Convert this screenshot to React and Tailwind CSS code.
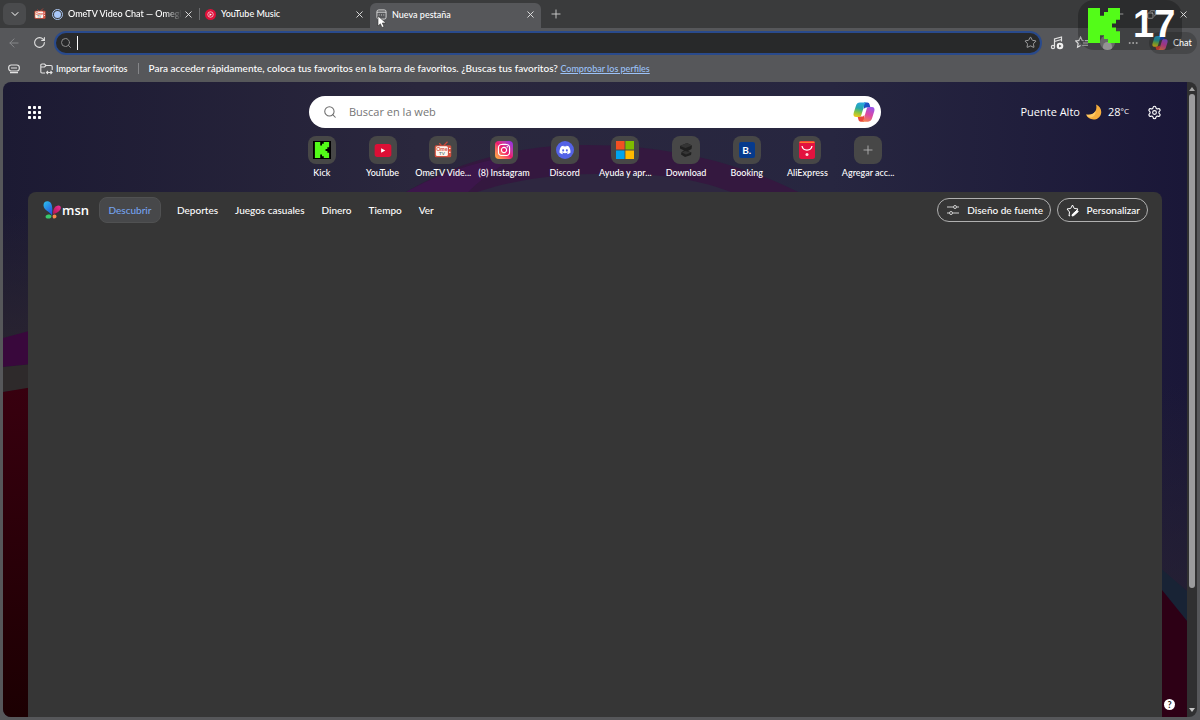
import { Search, X, Plus, Minus, Copy, ChevronDown, ArrowLeft, RotateCw, Star, Settings, Ellipsis } from 'lucide-react';
import { FaDiscord, FaInstagram } from 'react-icons/fa';

const KICK_PATH = 'M1.333 0h8v5.333H12V2.667h2.667V0h8v8H20v2.667h-2.667v2.666H20V16h2.667v8h-8v-2.667H12v-2.666H9.333V24h-8z';

const OmeTvIcon = ({ className }) => (
  <svg viewBox="0 0 24 24" className={className} aria-hidden="true">
    <path d="M10 6 7 3M13 6l5-5" stroke="#c9473a" strokeWidth="1.6" fill="none" />
    <rect x="1" y="5.500" width="22" height="16" rx="2" fill="#d4503f" />
    <rect x="2.500" y="7" width="16" height="13" rx="2" fill="#fff5ee" />
    <circle cx="21" cy="10" r="1" fill="#fff" />
    <circle cx="21" cy="15" r="1" fill="#fff" />
    <text x="10.500" y="13.500" textAnchor="middle" fontSize="7" fontWeight="700" fill="#d4503f" fontFamily="Lato, sans-serif">Ome</text>
    <text x="10.500" y="19" textAnchor="middle" fontSize="6" fontWeight="700" fill="#5b7f7a" fontFamily="Lato, sans-serif">TV</text>
  </svg>
);

const CopilotIcon = ({ className }) => (
  <svg viewBox="0 0 24 24" className={className} aria-hidden="true">
    <defs>
      <linearGradient id="cpLeft" x1="0.5" y1="0" x2="0.3" y2="1">
        <stop offset="0" stopColor="#2aa5e0" />
        <stop offset="0.4" stopColor="#27a8a8" />
        <stop offset="0.7" stopColor="#8cc63f" />
        <stop offset="1" stopColor="#f2c81e" />
      </linearGradient>
      <linearGradient id="cpRight" x1="0.7" y1="0" x2="0.3" y2="1">
        <stop offset="0" stopColor="#9a55e8" />
        <stop offset="0.5" stopColor="#d948a5" />
        <stop offset="1" stopColor="#f58050" />
      </linearGradient>
    </defs>
    <path d="M12 1.5h3.5c1.6 0 2.2 1 2.6 2.4L19 7h-4.500c-1.500 0-2.300.8-2.800 2.400z" fill="#1d4fc4" />
    <path d="M12 22.500H8.500c-1.600 0-2.200-1-2.600-2.400L5 17h4.500c1.500 0 2.300-.8 2.800-2.400z" fill="#e8483b" />
    <path d="M7.500 1.500h7.300c-1.300.3-2 1.300-2.500 3L9.200 15c-.5 1.600-1.400 2.500-3 2.500H3.400C.8 17.500 0 15.400.8 12.800l2.500-8C4 2.500 5.300 1.500 7.500 1.500z" fill="url(#cpLeft)" />
    <path d="M16.500 22.500H9.200c1.300-.3 2-1.300 2.500-3L14.800 9c.5-1.600 1.400-2.500 3-2.500h2.800c2.600 0 3.400 2.100 2.600 4.700l-2.500 8c-.7 2.300-2 3.300-4.200 3.300z" fill="url(#cpRight)" />
  </svg>
);

const MsnIcon = () => (
  <svg viewBox="0 0 18 18" className="size-[18px]" aria-hidden="true">
    <defs>
      <linearGradient id="msnBlue" x1="0" y1="0" x2="0.6" y2="1">
        <stop offset="0" stopColor="#2cc3ee" />
        <stop offset="1" stopColor="#2458dd" />
      </linearGradient>
      <linearGradient id="msnPink" x1="1" y1="0" x2="0" y2="1">
        <stop offset="0" stopColor="#f0339b" />
        <stop offset="1" stopColor="#b3124f" />
      </linearGradient>
    </defs>
    <path d="M9 14.500C7.500 11 .8 9.500.5 4.500.3 1.500 2.500 0 5 .3 9 1 10 6 9 14.500z" fill="url(#msnBlue)" />
    <path d="M10 13c0-5 2-8.500 5.500-8.500 2.300 0 3 2.200 1.700 4.200C15.800 11 13 12.500 10 13z" fill="url(#msnPink)" />
    <path d="M8.500 15c-.8-2-4.500-2-5.800 0-.7 1.500.6 2.700 2.600 2.600 1.900 0 3.200-.8 3.200-2.600z" fill="#39c96b" />
    <path d="M10 14c1.500-1.200 3.500-.5 3.500 1.500 0 1.700-2.500 2.700-3.500 1.500-.5-.6-.5-2.300 0-3z" fill="#f7894a" />
  </svg>
);

const KickTile = () => (
  <span className="flex size-[18px] items-center justify-center bg-black">
    <svg viewBox="0 0 24 24" className="size-4" aria-hidden="true"><path d={KICK_PATH} fill="#53fc18" /></svg>
  </span>
);

const YouTubeTile = () => (
  <svg viewBox="0 0 18 14" className="h-[13px] w-[18px]" aria-hidden="true">
    <rect width="18" height="14" rx="3" fill="#dc0f35" />
    <path d="M7 4.500v5L11.500 7z" fill="#fff" />
  </svg>
);

const MicrosoftTile = () => (
  <svg viewBox="0 0 18 18" className="size-[18px]" aria-hidden="true">
    <path d="M0 0h8.600v8.600H0z" fill="#f25022" />
    <path d="M9.400 0H18v8.600H9.400z" fill="#7fba00" />
    <path d="M0 9.400h8.600V18H0z" fill="#00a4ef" />
    <path d="M9.400 9.400H18V18H9.400z" fill="#ffb900" />
  </svg>
);

const DownloadTile = () => (
  <svg viewBox="0 0 16 16" className="size-4" aria-hidden="true">
    <path d="M2 4 9 1l5 2.500-.5 3.500-3.500 2 3.500 1.500-.5 2.500L7 15l-4-2.500.5-2.500L6 8.500 2 6.500z" fill="#202020" />
    <path d="m2 4 7-3 5 2.500L7.500 6z" fill="#343434" />
    <path d="m4 10.500 3-1.500 6 1.500L8 12.500z" fill="#353535" />
  </svg>
);

const AliExpressTile = () => (
  <svg viewBox="0 0 18 18" className="size-[18px]" aria-hidden="true">
    <rect x="1" width="16" height="18" rx="2.500" fill="#e3123f" />
    <path d="M1.500 1.200h15" stroke="#ff7a2e" strokeWidth="1.600" />
    <path d="M4 5c1 5.500 9 5.500 10 0" stroke="#fff" strokeWidth="1.300" fill="none" />
    <circle cx="9" cy="13.500" r="1.500" fill="#ffd9df" />
  </svg>
);

const SHORTCUTS = [
  { label: 'Kick', icon: <KickTile /> },
  { label: 'YouTube', icon: <YouTubeTile /> },
  { label: 'OmeTV Vide...', icon: <OmeTvIcon className="size-[18px]" /> },
  {
    label: '(8) Instagram',
    icon: (
      <span className="flex size-[18px] items-center justify-center rounded bg-linear-to-tr from-[#ffb52e] via-[#f0146c] to-[#8a1cf0]">
        <FaInstagram className="size-[14px] text-white" />
      </span>
    ),
  },
  {
    label: 'Discord',
    icon: (
      <span className="flex size-[18px] items-center justify-center rounded-full bg-[#5462e6]">
        <FaDiscord className="size-3 text-white" />
      </span>
    ),
  },
  { label: 'Ayuda y apr...', icon: <MicrosoftTile /> },
  { label: 'Download', icon: <DownloadTile /> },
  {
    label: 'Booking',
    icon: <span className="flex size-4 items-center justify-center rounded-xs bg-[#063a8c] text-[10px] font-bold text-white">B.</span>,
  },
  { label: 'AliExpress', icon: <AliExpressTile /> },
  { label: 'Agregar acc...', icon: <Plus className="size-[14px] text-[#b5b5b5]" strokeWidth={1.5} /> },
];

const SECTIONS = ['Deportes', 'Juegos casuales', 'Dinero', 'Tiempo', 'Ver'];

const CloseButton = ({ label }) => (
  <button aria-label={label} className="flex size-3 shrink-0 items-center justify-center text-[#e6e6e6]">
    <X className="size-[11px]" strokeWidth={2} />
  </button>
);

const TabBar = () => (
  <div className="flex h-7 shrink-0 items-center bg-[#3a3b3c] pl-[3px] text-[9px] font-medium text-white">
    <button aria-label="Buscar pestañas" className="flex h-[22px] w-[23px] shrink-0 items-center justify-center rounded-md bg-[#4a4b4d]">
      <ChevronDown className="size-3" />
    </button>
    <div className="flex w-[173px] items-center pr-[5px] pl-2">
      <OmeTvIcon className="size-3 shrink-0" />
      <span className="ml-[6px] flex size-[11px] shrink-0 items-center justify-center rounded-full border border-[#a9c6f2]">
        <span className="size-[7px] rounded-full bg-[#a9c8fa]" />
      </span>
      <span className="ml-[5px] flex-1 mask-r-from-85% whitespace-nowrap">OmeTV Video Chat — Omegl</span>
      <CloseButton label="Cerrar OmeTV" />
    </div>
    <span className="h-3 w-px bg-[#6a6b6d]" />
    <div className="flex w-[170px] items-center pr-[5px] pl-[5px]">
      <svg viewBox="0 0 12 12" className="size-[11px] shrink-0" aria-hidden="true">
        <circle cx="6" cy="6" r="6" fill="#e0103a" />
        <circle cx="6" cy="6" r="3" fill="none" stroke="#fff" strokeWidth="0.700" />
        <path d="M5 4.500v3L7.500 6z" fill="#fff" />
      </svg>
      <span className="ml-[5px] flex-1">YouTube Music</span>
      <CloseButton label="Cerrar YouTube Music" />
    </div>
    <div className="mt-[3px] flex w-[171px] items-center self-stretch rounded-t-md bg-[#56575a] pr-[5px] pb-[2px] pl-[6px]">
      <svg viewBox="0 0 12 12" className="size-[11px] shrink-0" fill="none" stroke="#ddd" aria-hidden="true">
        <rect x="1" y="1" width="10" height="10" rx="2" />
        <path d="M1 3.500h10M3 6.500h1m1.500 0h1m1.500 0h1" />
      </svg>
      <span className="ml-[5px] flex-1">Nueva pestaña</span>
      <CloseButton label="Cerrar Nueva pestaña" />
    </div>
    <button aria-label="Nueva pestaña" className="ml-2 text-[#d5d5d5]">
      <Plus className="size-[14px]" strokeWidth={1.5} />
    </button>
    <div className="mr-[11px] ml-auto flex items-center gap-[22px] text-[#e6e6e6]">
      <button aria-label="Minimizar"><Minus className="size-[10px]" strokeWidth={2} /></button>
      <button aria-label="Restaurar"><Copy className="size-[9px] -scale-x-100" strokeWidth={2} /></button>
      <button aria-label="Cerrar ventana"><X className="size-[11px]" strokeWidth={2} /></button>
    </div>
  </div>
);

const Toolbar = () => (
  <div className="flex h-[29px] shrink-0 items-center pr-[3px] pl-[7px] text-[#e2e2e2]">
    <button aria-label="Atrás" className="text-[#87888b]"><ArrowLeft className="size-[14px]" strokeWidth={1.7} /></button>
    <button aria-label="Actualizar" className="ml-3"><RotateCw className="size-[13px]" strokeWidth={2} /></button>
    <div className="ml-2 flex h-6 min-w-0 flex-1 items-center rounded-full border-2 border-[#294a8c] bg-[#28292a] pr-[3px] pl-1">
      <Search className="size-3 shrink-0 text-[#8c8c8c]" strokeWidth={2} />
      <span className="ml-[5px] h-[14px] w-px shrink-0 bg-white" />
      <input aria-label="Barra de direcciones" className="min-w-0 flex-1 bg-transparent text-[10px] text-white outline-none" />
      <button aria-label="Agregar a favoritos"><Star className="size-[13px] text-[#b0b0b0]" strokeWidth={1.6} /></button>
    </div>
    <button aria-label="Multimedia" className="ml-2">
      <svg viewBox="0 0 14 14" className="size-[14px]" fill="none" stroke="currentColor" strokeWidth="1.200" aria-hidden="true">
        <path d="M4.500 11V3l7-2v4.500M4.500 5.500l7-2" />
        <circle cx="3" cy="11" r="1.600" />
        <circle cx="10" cy="10" r="3.300" fill="#f2f2f2" stroke="none" />
        <path d="M9.200 8.500v3l2.300-1.500z" fill="#444" stroke="none" />
      </svg>
    </button>
    <button aria-label="Favoritos" className="ml-[11px]">
      <svg viewBox="0 0 14 14" className="size-[13px]" fill="none" stroke="currentColor" strokeWidth="1.200" aria-hidden="true">
        <path d="M9.500 5.200 7.700 4.800 6 1 4.300 4.800.8 5.300l2.600 2.600-.7 4.100L6 10.200M8.500 7.500H14M8 10h6M10.500 5H14" />
      </svg>
    </button>
    <button aria-label="Perfil" className="ml-3 flex size-[15px] items-end justify-center overflow-hidden rounded-full bg-[#8b8b8b]">
      <span className="h-2 w-[9px] rounded-t-full bg-[#c4c4c4]" />
    </button>
    <button aria-label="Más opciones" className="ml-3"><Ellipsis className="size-3" /></button>
    <button className="ml-[10px] flex h-[22px] w-[48px] items-center gap-[5px] rounded-full bg-[#464749] pl-[3px] text-[9px] font-medium text-white">
      <CopilotIcon className="size-[16px]" />
      Chat
    </button>
  </div>
);

const FavoritesBar = () => (
  <div className="flex h-[25px] shrink-0 items-center pb-[2px] pl-2 font-medium whitespace-nowrap text-white">
    <svg viewBox="0 0 12 10" className="h-[10px] w-3" fill="none" stroke="#e2e2e2" strokeWidth="1.200" aria-hidden="true">
      <rect x="0.700" y="1" width="10.600" height="6" rx="2.500" />
      <path d="M3 4h6M2 8.700h8" />
    </svg>
    <button className="ml-5 flex items-center gap-[3px] text-[9px]">
      <svg viewBox="0 0 13 12" className="h-3 w-[13px]" fill="none" stroke="#e2e2e2" strokeWidth="1.100" aria-hidden="true">
        <path d="M5 10H2Q.8 10 .8 8.800V2.200Q.8 1 2 1h2.500L6 2.500h5q1.200 0 1.200 1.200V7M1 4h3.500L6 2.500M6.500 9.500h5.500M8 8l-1.500 1.500L8 11M10.500 8 12 9.500 10.500 11" />
      </svg>
      Importar favoritos
    </button>
    <span className="mx-[10px] h-[11px] w-px bg-[#858689]" />
    <p className="text-[10px]">
      Para acceder rápidamente, coloca tus favoritos en la barra de favoritos. ¿Buscas tus favoritos?{' '}
      <a href="#perfiles" className="text-[9px] text-[#9cc2f8] underline">Comprobar los perfiles</a>
    </p>
  </div>
);

const Wallpaper = () => (
  <svg viewBox="0 0 1184 635" preserveAspectRatio="none" className="absolute inset-0 size-full" aria-hidden="true">
    <defs>
      <linearGradient id="sky">
        <stop offset="0" stopColor="#1c1a33" />
        <stop offset="0.350" stopColor="#2a273d" />
        <stop offset="0.700" stopColor="#272640" />
        <stop offset="1" stopColor="#1a1738" />
      </linearGradient>
      <linearGradient id="dusk" x1="0" y1="0" x2="0" y2="1">
        <stop offset="0" stopColor="#2a2430" stopOpacity="0" />
        <stop offset="1" stopColor="#2a2430" />
      </linearGradient>
      <linearGradient id="red" x1="0" y1="0" x2="0" y2="1">
        <stop offset="0" stopColor="#38000f" />
        <stop offset="1" stopColor="#1c0002" />
      </linearGradient>
    </defs>
    <rect width="1184" height="635" fill="url(#sky)" />
    <path d="M395 115C440 86 500 65 570 63c100-2 180 22 235 52z" fill="#34183f" />
    <path d="M460 115C510 96 560 90 630 92c50 2 80 10 110 23z" fill="#2e2740" />
    <path d="M395 115c35-22 80-36 120-42-20 12-40 26-55 42z" fill="#3c164b" />
    <path d="M0 130h30v150H0z" fill="url(#dusk)" />
    <path d="m0 256 30-8v34l-30 3z" fill="#39083c" />
    <path d="m0 285 30-3v24l-30 4z" fill="#2e2a2b" />
    <path d="m0 310 30-5v330H0z" fill="url(#red)" />
    <path d="M1155 300h29v210h-29z" fill="url(#dusk)" opacity="0.600" />
    <path d="m1155 484 29 25v30l-29-36z" fill="#182335" />
    <path d="m1155 503 29 36v96h-29z" fill="#2d0015" />
  </svg>
);

const ScrollBar = () => (
  <div className="z-10 flex w-[10px] shrink-0 flex-col items-center bg-[#303031] py-[5px]">
    <span className="h-0 w-0 border-x-[3px] border-b-[4px] border-x-transparent border-b-[#a5a5a5]" />
    <span className="mt-[3px] h-[79%] w-[6px] rounded-full bg-[#9b9b9d]" />
    <span className="mt-auto h-0 w-0 border-x-[3px] border-t-[4px] border-x-transparent border-t-[#c5c5c5]" />
  </div>
);

const SearchHeader = () => (
  <header className="grid grid-cols-[1fr_minmax(0,572px)_1fr] items-center pt-[14px] font-['Open_Sans',sans-serif] text-[11px] text-white">
    <button aria-label="Aplicaciones" className="ml-[25px] w-fit">
      <svg viewBox="0 0 13 13" className="size-[13px]" fill="#fff" aria-hidden="true">
        {[0, 5, 10].map((y) => [0, 5, 10].map((x) => <rect key={`${x}-${y}`} x={x} y={y} width="3" height="3" rx="0.800" />))}
      </svg>
    </button>
    <form className="flex h-8 items-center rounded-full bg-white pr-[6px] pl-[14px]">
      <Search className="size-[14px] shrink-0 text-[#6b6b6b]" strokeWidth={1.8} />
      <input aria-label="Buscar en la web" placeholder="Buscar en la web" className="ml-3 min-w-0 flex-1 text-black outline-none placeholder:text-[#757575]" />
      <button type="button" aria-label="Copilot"><CopilotIcon className="size-[22px]" /></button>
    </form>
    <div className="mr-[25px] flex items-center justify-end">
      <span>Puente Alto</span>
      <svg viewBox="0 0 16 16" className="mx-[6px] size-4" aria-hidden="true">
        <path d="M10 .5c4 1.500 6 5.500 5 9.500-1.200 4.500-6 6.500-10 5C2.500 14.200.8 12.500.3 10.500c4 1 7.700-.5 9.200-3.500 1-2 1.200-4.300.5-6.500z" fill="#f7ae3d" />
        <path d="M.3 10.500c4 1 7.700-.5 9.200-3.500.5 2.500-1 5.500-4.500 6.500-2 .3-3.900-.8-4.700-3z" fill="#ffc963" />
      </svg>
      <span className="flex items-start leading-4">28<span className="text-[8px] leading-[14px]">°C</span></span>
      <button aria-label="Configuración de página" className="ml-[18px]"><Settings className="size-[15px]" strokeWidth={1.8} /></button>
    </div>
  </header>
);

const Shortcuts = () => (
  <nav aria-label="Sitios frecuentes" className="mx-auto mt-2 grid w-[607px] grid-cols-10">
    {SHORTCUTS.map(({ label, icon }) => (
      <a key={label} href="#sitio" className="flex flex-col items-center gap-[3px] text-[9px] leading-[12px] font-medium whitespace-nowrap text-white">
        <span className="flex size-7 items-center justify-center rounded-lg bg-[#474747]">{icon}</span>
        {label}
      </a>
    ))}
  </nav>
);

const Feed = () => (
  <section className="mx-[25px] mt-[13px] flex-1 rounded-t-lg bg-[#363636] text-white">
    <div className="flex items-center pt-[5px] pr-[14px] pl-[15px] text-[10px] font-medium">
      <div className="flex w-[56px] items-center gap-px">
        <MsnIcon />
        <span className="font-['Open_Sans',sans-serif] text-[13px] leading-4 font-semibold">msn</span>
      </div>
      <button className="h-[26px] w-[62px] rounded-lg border border-[#505152] bg-[#47484a] text-[#75a3ef]">Descubrir</button>
      <nav className="ml-4 flex gap-[17px] whitespace-nowrap">
        {SECTIONS.map((name) => <a key={name} href="#seccion">{name}</a>)}
      </nav>
      <button className="ml-auto flex h-6 w-[114px] items-center justify-between rounded-full border border-[#b0b0b0] pr-[7px] pl-[9px]">
        <svg viewBox="0 0 12 12" className="size-3" fill="none" stroke="#d0d0d0" aria-hidden="true">
          <path d="M0 3h6.500M9.500 3H12M0 9h2.500M5.500 9H12" />
          <circle cx="8" cy="3" r="1.500" />
          <circle cx="4" cy="9" r="1.500" />
        </svg>
        Diseño de fuente
      </button>
      <button className="ml-[6px] flex h-6 w-[91px] items-center justify-between rounded-full border border-[#b0b0b0] pr-[7px] pl-2">
        <svg viewBox="0 0 13 13" className="size-[13px]" fill="none" stroke="#fff" aria-hidden="true">
          <path d="M4 11.500 3 12l.5-4L1 5l3.700-.6L6.500 1l1.700 3.400L12 5l-1.500 1.700" />
          <path d="m6 12 .5-1.800 4.500-4 1.300 1.300-4.500 4z" fill="#fff" />
        </svg>
        Personalizar
      </button>
    </div>
  </section>
);

// Counter shown by the stream on top of the browser window
const StreamBadge = () => (
  <div className="absolute top-0 right-[18px] z-20 flex h-[50px] w-[104px] items-start rounded-2xl bg-black/25 pt-2 pl-[10px]">
    <svg viewBox="1.333 0 21.334 24" preserveAspectRatio="none" className="h-[35px] w-[32px]" aria-hidden="true"><path d={KICK_PATH} fill="#53fc18" /></svg>
    <span className="ml-[13px] font-['Liberation_Sans',sans-serif] text-[38px] leading-8 font-bold text-white">17</span>
  </div>
);

export default function App() {
  return (
    <div className="relative flex h-screen flex-col overflow-hidden bg-[#56575a] font-['Lato','Open_Sans',sans-serif]">
      <TabBar />
      <Toolbar />
      <FavoritesBar />
      <main className="mx-[3px] mb-[3px] flex min-h-0 flex-1 overflow-hidden rounded-lg">
        <div className="relative min-w-0 flex-1">
          <Wallpaper />
          <div className="relative flex h-full flex-col">
            <SearchHeader />
            <Shortcuts />
            <Feed />
          </div>
          <button aria-label="Ayuda" className="absolute right-3 bottom-[7px] size-[11px] rounded-full bg-white text-[9px] leading-[11px] font-bold text-[#222]">?</button>
        </div>
        <ScrollBar />
      </main>
      <StreamBadge />
      <svg viewBox="0 0 10 14" className="absolute top-[15px] left-[377px] z-20 h-[14px] w-[10px]" aria-hidden="true">
        <path d="M1 1v10l2.400-2.200L5 12.500l2-.9-1.700-3.600H9z" fill="#fff" stroke="#333" strokeWidth="0.600" />
      </svg>
    </div>
  );
}
